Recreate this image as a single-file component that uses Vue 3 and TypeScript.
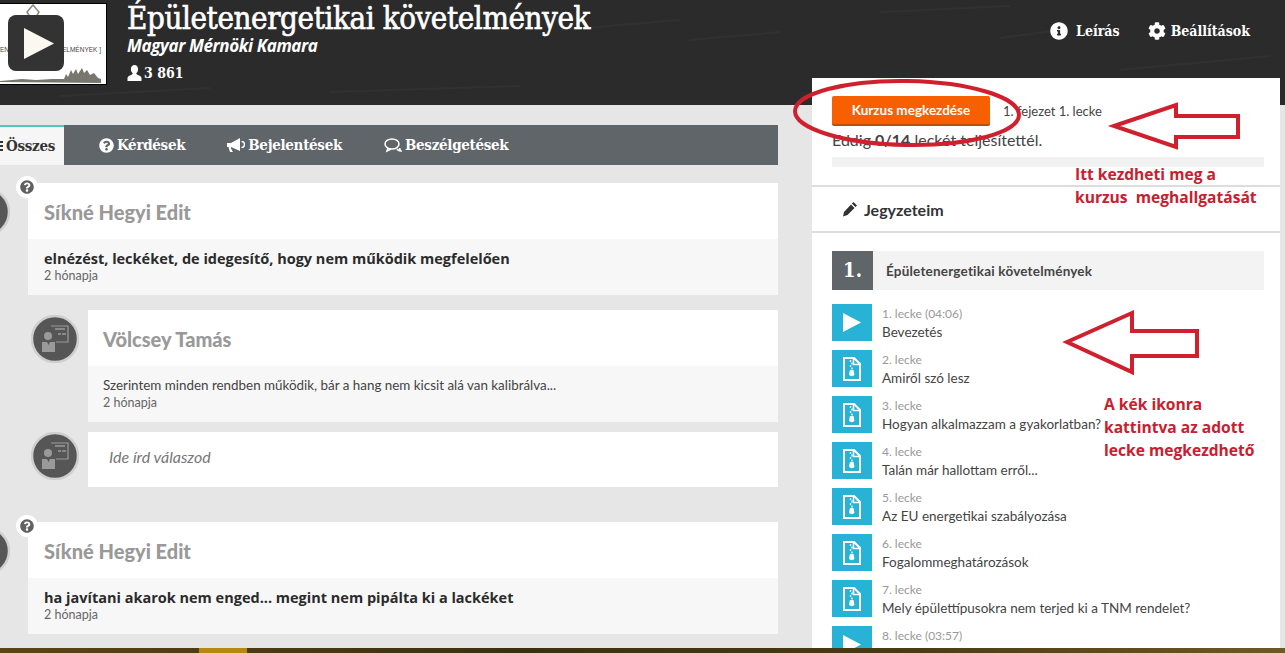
<script setup lang="ts">
const infoIcon = "M256 8C119.043 8 8 119.083 8 256c0 136.997 111.043 248 248 248s248-111.003 248-248C504 119.083 392.957 8 256 8zm0 110c23.196 0 42 18.804 42 42s-18.804 42-42 42-42-18.804-42-42 18.804-42 42-42zm56 254c0 6.627-5.373 12-12 12h-88c-6.627 0-12-5.373-12-12v-24c0-6.627 5.373-12 12-12h12v-64h-12c-6.627 0-12-5.373-12-12v-24c0-6.627 5.373-12 12-12h64c6.627 0 12 5.373 12 12v100h12c6.627 0 12 5.373 12 12v24z";
const questionIcon = "M504 256c0 136.997-111.043 248-248 248S8 392.997 8 256C8 119.083 119.043 8 256 8s248 111.083 248 248zM262.655 90c-54.497 0-89.255 22.957-116.549 63.758-3.536 5.286-2.353 12.415 2.715 16.258l34.699 26.31c5.205 3.947 12.621 3.008 16.665-2.122 17.864-22.658 30.113-35.797 57.303-35.797 20.429 0 45.698 13.148 45.698 32.958 0 14.976-12.363 22.667-32.534 33.976C247.128 238.528 216 254.941 216 296v4c0 6.627 5.373 12 12 12h56c6.627 0 12-5.373 12-12v-1.333c0-28.462 83.186-29.647 83.186-106.667 0-58.002-60.165-102-116.531-102zM256 338c-25.365 0-46 20.635-46 46 0 25.364 20.635 46 46 46s46-20.636 46-46c0-25.365-20.635-46-46-46z";
const cogIcon = "M487.4 315.7l-42.6-24.6c4.3-23.2 4.3-47 0-70.2l42.6-24.6c4.9-2.8 7.1-8.6 5.5-14-11.1-35.6-30-67.8-54.7-94.6-3.8-4.1-10-5.1-14.8-2.3L380.8 110c-17.9-15.4-38.5-27.3-60.8-35.1V25.8c0-5.6-3.9-10.5-9.4-11.7-36.7-8.2-74.3-7.8-109.2 0-5.5 1.2-9.4 6.1-9.4 11.7V75c-22.2 7.9-42.8 19.8-60.8 35.1L88.7 85.5c-4.9-2.8-11-1.9-14.8 2.3-24.7 26.7-43.6 58.9-54.7 94.6-1.7 5.4.6 11.2 5.5 14L67.3 221c-4.3 23.2-4.3 47 0 70.2l-42.6 24.6c-4.9 2.8-7.1 8.6-5.5 14 11.1 35.6 30 67.8 54.7 94.6 3.8 4.1 10 5.1 14.8 2.3l42.6-24.6c17.9 15.4 38.5 27.3 60.8 35.1v49.2c0 5.6 3.9 10.5 9.4 11.7 36.7 8.2 74.3 7.8 109.2 0 5.5-1.2 9.4-6.1 9.4-11.7v-49.2c22.2-7.9 42.8-19.8 60.8-35.1l42.6 24.6c4.9 2.8 11 1.9 14.8-2.3 24.7-26.7 43.6-58.9 54.7-94.6 1.5-5.5-.7-11.3-5.6-14.1zM256 336c-44.1 0-80-35.9-80-80s35.9-80 80-80 80 35.9 80 80-35.9 80-80 80z";

const lessons = [
  { label: "1. lecke (04:06)", title: "Bevezetés", video: true },
  { label: "2. lecke", title: "Amiről szó lesz", video: false },
  { label: "3. lecke", title: "Hogyan alkalmazzam a gyakorlatban?", video: false },
  { label: "4. lecke", title: "Talán már hallottam erről...", video: false },
  { label: "5. lecke", title: "Az EU energetikai szabályozása", video: false },
  { label: "6. lecke", title: "Fogalommeghatározások", video: false },
  { label: "7. lecke", title: "Mely épülettípusokra nem terjed ki a TNM rendelet?", video: false },
  { label: "8. lecke (03:57)", title: "", video: true },
];
</script>

<template>
  <div class="page">
    <header class="top">
      <svg class="chalk" width="1285" height="105" viewBox="0 0 1285 105">
        <path d="M60 96l150-8M330 92l190-6M560 30l120-10M690 40l90-8M1000 38l60-8M1120 70l150-14M880 12l130-6" stroke="#fff" stroke-opacity=".03" stroke-width="2" fill="none" />
      </svg>
      <div class="thumb">
        <svg class="thumb-art" viewBox="0 0 107 81" width="107" height="81">
          <path d="M27 9l6-7 6 7-3 5h-6z" fill="none" stroke="#8a8a7a" stroke-width="1.500" />
          <path d="M0 79v-1l12-1 10-1 14 1 16-1h12l2-5 2 3 3-7 2 4 3-5 2 5 4-6 2 5 3-3 3 5 4-2 4 5 3 1v4z" fill="#77776f" />
        </svg>
        <span class="thumb-text left">EN</span>
        <span class="thumb-text right">ELMÉNYEK ]</span>
        <span class="play">
          <svg viewBox="0 0 56 56" width="56" height="56"><path d="M16 13v31l30-15.500z" fill="#fbf8f1" /></svg>
        </span>
      </div>
      <div class="course">
        <h1>Épületenergetikai követelmények</h1>
        <div class="org">Magyar Mérnöki Kamara</div>
        <div class="count">
          <svg viewBox="0 0 14 16" width="15" height="16"><path d="M7 0c2.200 0 3.600 1.800 3.600 4.200 0 1.800-.8 3.200-1.800 4 0 1 .6 1.300 2.200 2 1.800.7 3 1.300 3 3v2.800H0v-2.800c0-1.700 1.200-2.300 3-3 1.600-.7 2.200-1 2.200-2-1-.8-1.800-2.200-1.800-4C3.400 1.800 4.800 0 7 0z" fill="#fff" /></svg>
          <span>3 861</span>
        </div>
      </div>
      <nav class="top-nav">
        <a><svg viewBox="0 0 512 512" width="18" height="18"><path :d="infoIcon" fill="#fff" /></svg>Leírás</a>
        <a class="tight"><svg viewBox="0 0 512 512" width="18" height="18"><path :d="cogIcon" fill="#fff" /></svg>Beállítások</a>
      </nav>
    </header>

    <main class="content">
      <section class="feed">
        <div class="tabs">
          <a class="tab active">
            <svg viewBox="0 0 10 12" width="10" height="12"><path d="M0 1h10v2H0zM0 5h10v2H0zM0 9h10v2H0z" fill="#333" /></svg>Összes
          </a>
          <a class="tab">
            <svg viewBox="0 0 512 512" width="15" height="15"><path :d="questionIcon" fill="#fff" /></svg>Kérdések
          </a>
          <a class="tab">
            <svg viewBox="0 0 18 15" width="18" height="15"><path d="M0 5h4l9-5v13L4 9v1.500l2 3.500H3L1.500 9H0z" fill="#fff" /><path d="M14.500 3.500c2 0 3 1.300 3 3s-1 3-3 3" fill="none" stroke="#fff" stroke-width="1.500" /></svg>Bejelentések
          </a>
          <a class="tab">
            <svg viewBox="0 0 18 15" width="18" height="15"><ellipse cx="8" cy="6" rx="7" ry="5" fill="none" stroke="#fff" stroke-width="1.500" /><path d="M4 10l-1 3 4-2M13 11c1 1.500 2.500 2 4 2-1-.8-1.300-1.800-1.300-3" fill="none" stroke="#fff" stroke-width="1.500" /></svg>Beszélgetések
          </a>
        </div>

        <article class="row first">
          <span class="avatar">
            <svg viewBox="0 0 48 48" width="48" height="48"><use href="#teacher" /></svg>
          </span>
          <span class="badge"><svg viewBox="0 0 512 512" width="14" height="14"><path :d="questionIcon" fill="#616161" /></svg></span>
          <div class="card">
            <div class="card-name">Síkné Hegyi Edit</div>
            <div class="card-body">
              <p class="strong">elnézést, leckéket, de idegesítő, hogy nem működik megfelelően</p>
              <time>2 hónapja</time>
            </div>
          </div>
        </article>

        <article class="row nested">
          <span class="avatar">
            <svg viewBox="0 0 48 48" width="48" height="48"><use href="#teacher" /></svg>
          </span>
          <div class="card">
            <div class="card-name">Völcsey Tamás</div>
            <div class="card-body">
              <p>Szerintem minden rendben működik, bár a hang nem kicsit alá van kalibrálva...</p>
              <time>2 hónapja</time>
            </div>
          </div>
        </article>

        <article class="row nested reply">
          <span class="avatar">
            <svg viewBox="0 0 48 48" width="48" height="48"><use href="#teacher" /></svg>
          </span>
          <div class="card reply-box">Ide írd válaszod</div>
        </article>

        <article class="row second">
          <span class="avatar">
            <svg viewBox="0 0 48 48" width="48" height="48"><use href="#teacher" /></svg>
          </span>
          <span class="badge"><svg viewBox="0 0 512 512" width="14" height="14"><path :d="questionIcon" fill="#616161" /></svg></span>
          <div class="card">
            <div class="card-name">Síkné Hegyi Edit</div>
            <div class="card-body">
              <p class="strong">ha javítani akarok nem enged... megint nem pipálta ki a lackéket</p>
              <time>2 hónapja</time>
            </div>
          </div>
        </article>
      </section>

      <aside class="side">
        <div class="start">
          <div class="start-line">
            <button class="start-btn">Kurzus megkezdése</button>
            <span class="where">1. fejezet 1. lecke</span>
          </div>
          <p class="progress-text">Eddig <b>0/14</b> leckét teljesítettél.</p>
          <div class="progress"></div>
        </div>
        <div class="notes">
          <svg viewBox="0 0 16 16" width="16" height="16"><path d="M11.500 1l3.500 3.500-1.600 1.600-3.500-3.500zM9 3.500L12.500 7l-7 7-4.500 1.500L2 11z" fill="#333" /></svg>
          Jegyzeteim
        </div>
        <div class="chapter">
          <div class="chapter-head">
            <span class="chapter-num">1.</span>
            <span class="chapter-title">Épületenergetikai követelmények</span>
          </div>
          <div v-for="lesson in lessons" :key="lesson.label" class="lesson">
            <span class="lesson-icon">
              <svg v-if="lesson.video" viewBox="0 0 40 37" width="40" height="37"><path d="M11 9v19l18-9.500z" fill="#fff" /></svg>
              <svg v-else viewBox="0 0 40 37" width="40" height="37">
                <path d="M12 8h10l6 6v16H12z" fill="none" stroke="#fff" stroke-width="2" />
                <path d="M21.500 8v6.500H28" fill="none" stroke="#fff" stroke-width="1.500" />
                <path d="M18.500 10v2M20 12.500v2M18.500 15v2M20 17.500v2" stroke="#fff" stroke-width="1.300" />
                <path d="M18 20h3.500l1 4.500a3 3 0 0 1-5.500 0z" fill="#fff" />
              </svg>
            </span>
            <span class="lesson-text">
              <small>{{ lesson.label }}</small>
              <span v-if="lesson.title">{{ lesson.title }}</span>
            </span>
          </div>
        </div>
      </aside>
    </main>

    <div class="strip"><i></i></div>

    <svg class="defs" width="0" height="0">
      <symbol id="teacher" viewBox="0 0 48 48">
        <circle cx="24" cy="24" r="23" fill="#565656" stroke="#cfcfcf" stroke-width="2.500" />
        <path d="M20 11h17v16H25" fill="none" stroke="#9a9a9a" stroke-width="1.200" />
        <path d="M24 14h10M27 19h3M31 19h4" stroke="#9a9a9a" stroke-width="1.500" />
        <circle cx="17" cy="21" r="4" fill="#9a9a9a" />
        <path d="M11 27h5l1.500 3 1.500-3h5v10H11z" fill="#9a9a9a" />
      </symbol>
    </svg>

    <svg class="marks" width="1285" height="653" viewBox="0 0 1285 653">
      <ellipse cx="907" cy="113" rx="112" ry="32" fill="none" stroke="#d0202e" stroke-width="4" transform="rotate(1 907 113)" />
      <path d="M1114 126l62-21v11h62v21h-62v10z" fill="none" stroke="#d0202e" stroke-width="4" />
      <path d="M1067 342l65-29v18h65v25h-65v16z" fill="none" stroke="#d0202e" stroke-width="4" />
    </svg>
    <div class="note note-a">Itt kezdheti meg a<br />kurzus&nbsp; meghallgatását</div>
    <div class="note note-b">A kék ikonra<br />kattintva az adott<br />lecke megkezdhető</div>
  </div>
</template>

<style>
html, body { margin: 0; background: #e6e6e6; }
</style>

<style scoped>
.page { position: relative; width: 1285px; height: 653px; overflow: hidden; display: flex; flex-direction: column; background: #e6e6e6; font-family: "Lato", "Noto Sans", sans-serif; color: #333; }
.top { position: relative; flex: none; height: 105px; display: flex; background: #2b2b2b; color: #fff; }
.chalk { position: absolute; left: 0; top: 0; }

.thumb { position: relative; flex: none; width: 107px; height: 82px; margin-top: 3px; border: 1px solid #000; border-left: 0; box-sizing: border-box; background: #fff; overflow: hidden; }
.thumb-art { position: absolute; left: 0; top: -1px; }
.thumb-text { position: absolute; top: 42px; white-space: nowrap; font: 6.500px "Liberation Sans", sans-serif; color: #444; }
.thumb-text.left { left: 0; }
.thumb-text.right { right: 5px; }
.play { position: absolute; left: 8px; top: 11px; width: 56px; height: 56px; border-radius: 8px; background: #333; }
.play svg { display: block; }

.course { position: relative; margin-left: 20px; padding-top: 2px; }
.course h1 { margin: 0; font: 400 31px/33px "DejaVu Serif", serif; font-stretch: condensed; letter-spacing: -.4px; white-space: nowrap; -webkit-text-stroke: .6px #fff; }
.org { font: italic 700 17px/22px "Open Sans", sans-serif; letter-spacing: -.4px; }
.count { display: flex; align-items: center; gap: 2px; margin-top: 7px; font: 700 14px/18px "DejaVu Serif", serif; font-stretch: condensed; }

.top-nav { position: relative; margin-left: auto; display: flex; gap: 28px; padding: 22px 35px 0 0; font: 700 14px/18px "DejaVu Serif", serif; font-stretch: condensed; }
.top-nav a { display: flex; align-items: center; gap: 8px; height: 18px; }
.top-nav a.tight { gap: 5px; }

.content { flex: 1; min-height: 0; display: flex; align-items: flex-start; }
.feed { flex: none; width: 816px; margin: 20px 0 0 -38px; }
.tabs { display: flex; height: 40px; background: #5f6568; }
.tab { display: flex; align-items: center; gap: 3px; padding-left: 35px; color: #fff; font: 700 15px/40px "DejaVu Serif", serif; font-stretch: condensed; letter-spacing: -.3px; }
.tab:nth-child(3) { padding-left: 42px; }
.tab:nth-child(4) { padding-left: 42px; }
.tab.active { width: 102px; padding-left: 31px; box-sizing: border-box; background: #f6f6f6; border-top: 2px solid #4fc9b5; color: #333; }

.row { position: relative; display: flex; }
.row.first { margin-top: 18px; }
.row.nested { margin: 15px 0 0 69px; }
.row.reply { margin-top: 10px; }
.row.second { margin-top: 35px; }
.avatar { flex: none; width: 48px; height: 48px; margin-top: 5px; }
.avatar svg { display: block; }
.row.reply .avatar { margin-top: 0; }
.row.first .card, .row.second .card { margin-left: 18px; }
.row.nested .card { margin-left: 9px; }
.row.first .card-name, .row.second .card-name, .row.first .card-body, .row.second .card-body { padding-left: 16px; }
.badge { position: absolute; left: 54px; top: -7px; display: grid; place-items: center; width: 22px; height: 22px; border-radius: 50%; background: #fff; }
.badge svg { display: block; }

.card { flex: 1; min-width: 0; background: #fff; }
.card-name { height: 56px; padding-left: 15px; font: 900 20px/58px "Lato", sans-serif; color: #999; }
.card-body { height: 56px; box-sizing: border-box; padding: 10px 15px 0; background: #f7f7f7; }
.card-body p { margin: 0; font-size: 13.400px; line-height: 18px; color: #444; }
.card-body p.strong { padding-top: 1px; font: 700 14.500px/18px "Open Sans", sans-serif; color: #2b2b2b; }
.card-body time { display: block; margin-top: 1px; font-size: 12.500px; line-height: 15px; color: #666; }
.card-body p.strong + time { margin-top: 0; }
.reply-box { height: 55px; padding-left: 21px; font-size: 16px; font-style: italic; line-height: 50px; color: #777; }

.side { flex: none; width: 468px; margin: -27px 0 0 34px; background: #fff; position: relative; }
.start { height: 109px; box-sizing: border-box; padding: 18px 16px 0 20px; border-bottom: 2px solid #ddd; }
.start-line { display: flex; align-items: center; gap: 13px; }
.start-btn { width: 158px; height: 30px; border: 0; border-bottom: 2px solid #b9500c; border-radius: 2px; background: #f85f00; color: #fff; font: 700 13.500px "Lato", sans-serif; }
.where { font-size: 13px; color: #444; }
.progress-text { margin: 4px 0 0; font-size: 16px; line-height: 20px; color: #444; }
.progress { height: 10px; margin-top: 7px; background: #f2f2f2; }

.notes { height: 46px; box-sizing: border-box; display: flex; align-items: center; gap: 6px; padding-left: 30px; border-bottom: 2px solid #ddd; font-size: 16px; font-weight: 700; color: #333; }
.chapter { padding: 18px 16px 0 20px; }
.chapter-head { display: flex; align-items: center; height: 39px; margin-bottom: 14px; background: #f3f3f3; }
.chapter-num { width: 41px; height: 39px; background: #5f6568; color: #fff; text-align: center; font: 700 20px/38px "DejaVu Serif", serif; font-stretch: condensed; }
.chapter-title { margin-left: 13px; font-size: 13.500px; font-weight: 700; color: #444; letter-spacing: .2px; }
.lesson { display: flex; height: 37px; margin-bottom: 9px; }
.lesson-icon { flex: none; width: 40px; height: 37px; background: #27b2d6; }
.lesson-icon svg { display: block; }
.lesson-text { display: flex; flex-direction: column; margin: 1px 0 0 10px; font-size: 13.500px; line-height: 19px; color: #444; white-space: nowrap; }
.lesson-text small { font-size: 12px; line-height: 18px; color: #999; }

.strip { position: absolute; left: 0; right: 0; bottom: 0; height: 5px; background: linear-gradient(90deg, #5a4516, #3c2f10 40%, #4a3a14 70%, #6b5a24); }
.strip i { display: block; width: 48px; height: 5px; margin-left: 199px; background: #b5890f; }

.defs { position: absolute; }
.marks { position: absolute; left: 0; top: 0; pointer-events: none; }
.note { position: absolute; font: 700 15.600px/23px "Open Sans", sans-serif; color: #c8202f; white-space: nowrap; }
.note-a { left: 1075px; top: 163px; }
.note-b { left: 1104px; top: 393px; }
</style>
